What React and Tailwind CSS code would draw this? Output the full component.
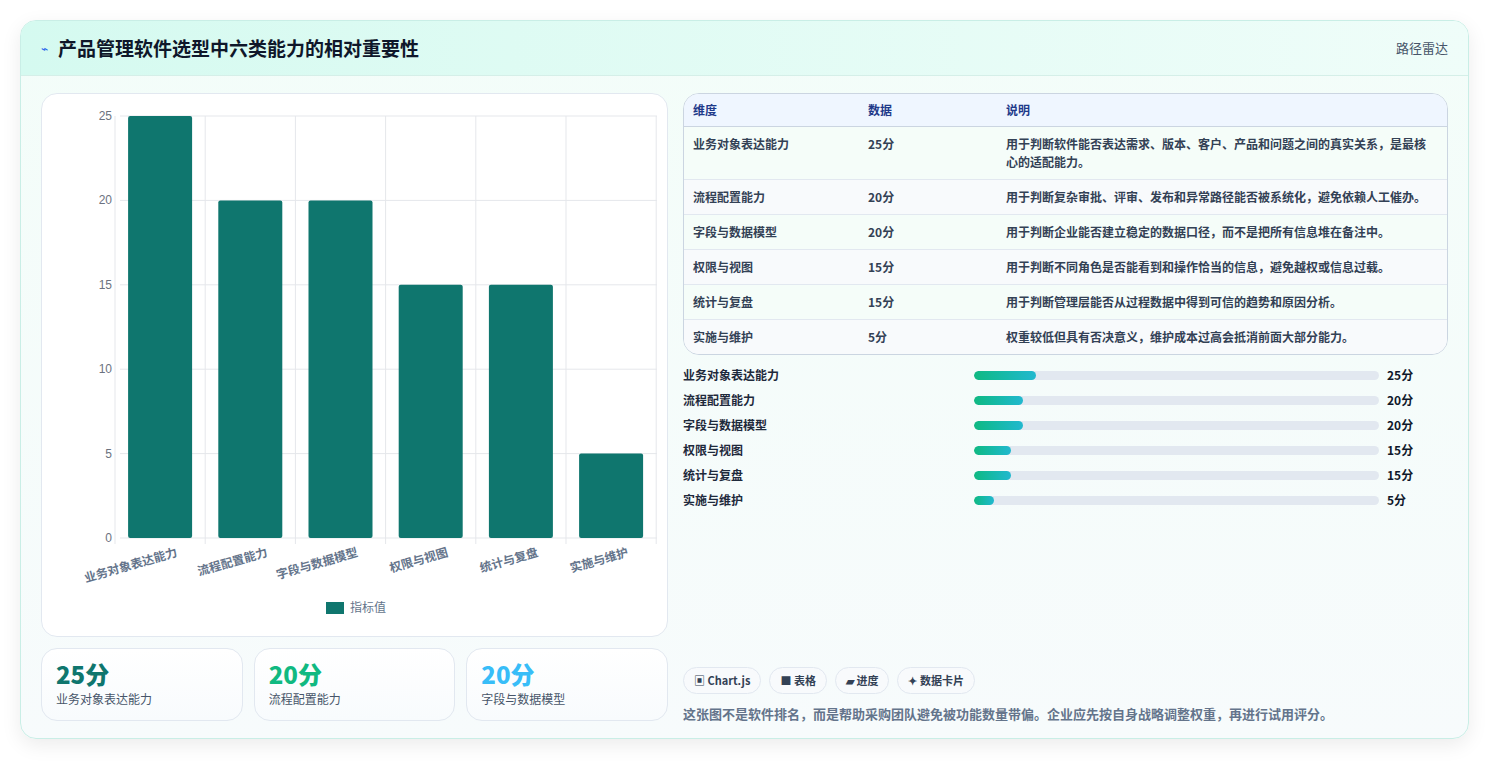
import React from "react";

const data = [
  ["业务对象表达能力", 25, "用于判断软件能否表达需求、版本、客户、产品和问题之间的真实关系，是最核心的适配能力。"],
  ["流程配置能力", 20, "用于判断复杂审批、评审、发布和异常路径能否被系统化，避免依赖人工催办。"],
  ["字段与数据模型", 20, "用于判断企业能否建立稳定的数据口径，而不是把所有信息堆在备注中。"],
  ["权限与视图", 15, "用于判断不同角色是否能看到和操作恰当的信息，避免越权或信息过载。"],
  ["统计与复盘", 15, "用于判断管理层能否从过程数据中得到可信的趋势和原因分析。"],
  ["实施与维护", 5, "权重较低但具有否决意义，维护成本过高会抵消前面大部分能力。"],
];
const barW = { 25: 62, 20: 49, 15: 37, 5: 20 };

function Chart() {
  const x0 = 84, y0 = 22, h = 422, cw = 90.2;
  const y = (v) => y0 + h - (v / 25) * h;
  return (
    <svg width="627" height="543" className="block">
      {[0, 5, 10, 15, 20, 25].map((v) => (
        <g key={v}>
          <line x1={x0 - 6} x2={615} y1={y(v)} y2={y(v)} stroke="#e5e7eb" />
          <text x={x0 - 14} y={y(v) + 4} textAnchor="end" fontSize="12" fill="#6b7280" fontFamily="Liberation Sans, sans-serif">{v}</text>
        </g>
      ))}
      {[0, 1, 2, 3, 4, 5, 6].map((i) => (
        <line key={i} x1={x0 - 11 + i * cw} x2={x0 - 11 + i * cw} y1={y0} y2={y0 + h + 6} stroke="#e5e7eb" />
      ))}
      {data.map(([n, v], i) => {
        const cx = x0 - 11 + i * cw + cw / 2;
        return (
          <g key={n}>
            <rect x={cx - 32} y={y(v)} width="64" height={y(0) - y(v)} rx="2" fill="#0f766e" />
            <text transform={`translate(${cx + 18},${y0 + h + 18}) rotate(-16)`} textAnchor="end" fontSize="12" fontWeight="700" fill="#64748b" fontFamily="Noto Sans CJK SC, sans-serif">{n}</text>
          </g>
        );
      })}
      <rect x="284" y="508" width="18" height="12" fill="#0f766e" />
      <text x="308" y="518" fontSize="12" fill="#64748b" fontFamily="Noto Sans CJK SC, sans-serif">指标值</text>
    </svg>
  );
}

export default function App() {
  return (
    <div className="w-[1489px] h-[761px] bg-white p-5 pb-0" style={{ fontFamily: "'Noto Sans CJK SC', Inter, sans-serif" }}>
      <div className="h-[719px] rounded-2xl border border-[#c9eee6] bg-gradient-to-b from-[#f3fdf9] to-[#f7fbfc] shadow-[0_6px_20px_rgba(0,0,0,0.08)] overflow-hidden">
        <div className="h-[55px] bg-gradient-to-r from-[#d5faf0] to-[#effdf9] border-b border-[#d5efe8] flex items-center justify-between px-5">
          <div className="flex items-center gap-[10px]">
            <span className="text-[#2563eb] text-xs">⌁</span>
            <span className="text-[19px] font-bold text-[#0f172a]">产品管理软件选型中六类能力的相对重要性</span>
          </div>
          <span className="text-[13px] text-[#475569]">路径雷达</span>
        </div>
        <div className="flex gap-[15px] px-5 pt-[17px]">
          <div className="w-[627px] flex flex-col gap-[11px]">
            <div className="h-[544px] bg-white rounded-2xl border border-[#e2e8f0]"><Chart /></div>
            <div className="flex gap-[11px]">
              {[["25分", "text-[#0f766e]", "业务对象表达能力"], ["20分", "text-[#10b981]", "流程配置能力"], ["20分", "text-[#38bdf8]", "字段与数据模型"]].map(([v, c, l]) => (
                <div key={l} className="w-[202px] h-[73px] rounded-2xl border border-[#e2e8f0] bg-gradient-to-b from-white to-[#f8fbfd] px-[14px] pt-[10px]">
                  <div className={`text-[24px] font-extrabold leading-[30px] ${c}`}>{v}</div>
                  <div className="text-xs text-[#475569] mt-[2px]">{l}</div>
                </div>
              ))}
            </div>
          </div>
          <div className="w-[767px] flex flex-col">
            <div className="rounded-2xl border border-[#cbd5e1] overflow-hidden bg-white">
              <div className="flex h-[33px] items-center bg-[#eff6ff] border-b border-[#cbd5e1] text-xs font-bold text-[#1e3a8a]">
                <div className="w-[184px] pl-[9px]">维度</div><div className="w-[138px]">数据</div><div>说明</div>
              </div>
              {data.map(([n, v, d], i) => (
                <div key={n} className={`flex items-start text-xs font-semibold text-[#334155] border-b border-[#e2e8f0] last:border-b-0 py-[8px] leading-[18px] ${i % 2 ? "bg-[#f8fafc]" : "bg-[#f5fdf9]"}`}>
                  <div className="w-[184px] pl-[9px]">{n}</div><div className="w-[138px]">{v}分</div><div className="w-[428px]">{d}</div>
                </div>
              ))}
            </div>
            <div className="mt-[11px] flex flex-col gap-[7px]">
              {data.map(([n, v]) => (
                <div key={n} className="flex items-center h-[18px] text-xs font-semibold text-[#1e293b]">
                  <div className="w-[291px]">{n}</div>
                  <div className="w-[405px] h-[9px] rounded-full bg-[#e2e8f0] overflow-hidden">
                    <div className="h-full rounded-full bg-gradient-to-r from-[#10b981] to-[#22b8cf]" style={{ width: barW[v] }} />
                  </div>
                  <div className="ml-2 font-bold text-[#0f172a]">{v}分</div>
                </div>
              ))}
            </div>
            <div className="mt-[158px] flex gap-[8px]">
              {["▣ Chart.js", "■ 表格", "▰ 进度", "✦ 数据卡片"].map((t) => (
                <div key={t} className="h-[27px] px-[10px] rounded-full border border-[#e2e8f0] bg-[#f8fafc] text-[11px] font-bold text-[#334155] flex items-center">{t}</div>
              ))}
            </div>
            <div className="mt-[10px] text-[13px] font-semibold text-[#64748b]">这张图不是软件排名，而是帮助采购团队避免被功能数量带偏。企业应先按自身战略调整权重，再进行试用评分。</div>
          </div>
        </div>
      </div>
    </div>
  );
}
